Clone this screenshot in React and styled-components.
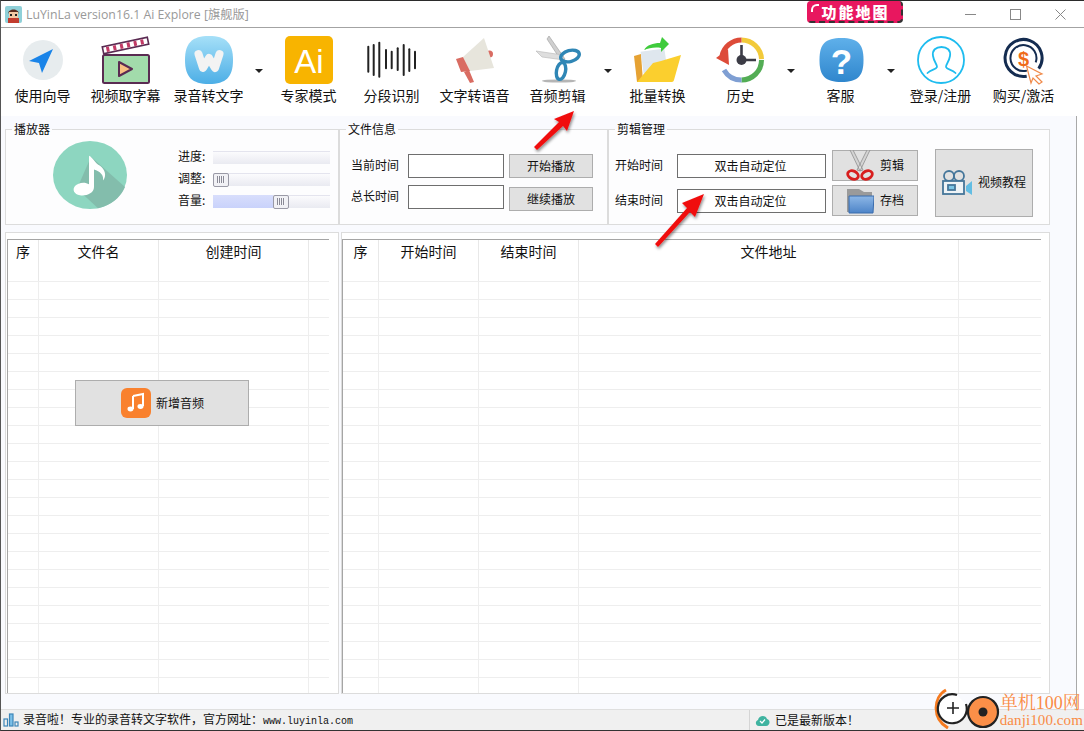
import React from "react";
import styled, { createGlobalStyle } from "styled-components";

const CJK = `"Noto Sans CJK SC", "Noto Sans", sans-serif`;

const Global = createGlobalStyle`
  html, body { margin: 0; padding: 0; background: #fff; }
  * { box-sizing: border-box; }
`;

const Win = styled.div`
  position: relative;
  width: 1084px;
  height: 731px;
  display: flex;
  flex-direction: column;
  overflow: hidden;
  border-top: 1px solid #2b2b2b;
  border-left: 1px solid #555;
  border-bottom: 1px solid #333;
  background: #fff;
  font-family: ${CJK};
  font-size: 13px;
  color: #111;
`;

const TitleBar = styled.div`
  height: 27px;
  flex: none;
  display: flex;
  align-items: center;
  padding-left: 4px;
  gap: 4px;
  border-bottom: 1px solid #a3a3a3;
`;
const TitleText = styled.span`
  font-family: "Open Sans", ${CJK};
  font-size: 12.3px;
  color: #999;
`;
const WinButtons = styled.div`
  margin-left: auto;
  display: flex;
  height: 100%;
  align-items: center;
`;
const WinBtn = styled.div`
  width: 45px;
  height: 100%;
  display: flex;
  align-items: center;
  justify-content: center;
  margin-right: ${(p) => p.$mr || 0}px;
`;

const Toolbar = styled.div`
  height: 88px;
  flex: none;
  display: flex;
  background: #fff;
`;
const Tool = styled.div`
  width: 83px;
  display: flex;
  flex-direction: column;
  align-items: center;
  padding-top: 8px;
`;
const ToolIcon = styled.svg`
  width: 50px;
  height: 50px;
  display: block;
`;
const ToolLabel = styled.span`
  margin-top: -1px;
  font-size: 14px;
  line-height: 20px;
  white-space: nowrap;
  color: #111;
`;
const Caret = styled.div`
  width: 17px;
  display: flex;
  justify-content: center;
  padding-top: 41px;
  &::after {
    content: "";
    width: 0;
    height: 0;
    border-left: 4px solid transparent;
    border-right: 4px solid transparent;
    border-top: 4px solid #222;
  }
`;

const Main = styled.div`
  flex: 1;
  min-height: 0;
  margin-right: 7px;
  padding: 13px 0 0 4px;
  background: #f9fafe;
  border-right: 1px solid #a9a9a9;
`;
const GroupRow = styled.div`
  display: flex;
  height: 96px;
`;
const Group = styled.div`
  position: relative;
  width: ${(p) => p.$w}px;
  height: 96px;
  display: flex;
  align-items: flex-start;
  padding-left: ${(p) => p.$pl}px;
  border: 1px solid #dcdcdc;
  background: #fdfdfe;
`;
const Legend = styled.span`
  position: absolute;
  top: -9px;
  left: 6px;
  padding: 0 2px;
  line-height: 16px;
  font-size: 12px;
  background: linear-gradient(#f9fafe 50%, #fdfdfe 50%);
`;

const Disc = styled.svg`
  width: 75px;
  height: 69px;
  margin-top: 11px;
  flex: none;
`;
const Sliders = styled.div`
  margin: 20px 0 0 50px;
  display: flex;
  flex-direction: column;
  gap: 8px;
`;
const SliderRow = styled.div`
  display: flex;
  align-items: center;
  height: 14px;
`;
const SliderLabel = styled.span`
  width: 35px;
  font-size: 12px;
  line-height: 12px;
  padding-bottom: 2px;
`;
const Track = styled.div`
  position: relative;
  width: 117px;
  height: 13px;
  border-top: 1px solid #e4e4ee;
  background: linear-gradient(#fbfbfd, #e9eaf1);
`;
const TrackFill = styled.div`
  position: absolute;
  left: 0;
  top: -1px;
  bottom: 0;
  background: linear-gradient(#d8defc, #c9d2fb);
`;
const Thumb = styled.div`
  position: absolute;
  top: -1px;
  left: ${(p) => p.$x}px;
  width: 16px;
  height: 14px;
  border: 1px solid #9a9aa6;
  border-radius: 2px;
  background: repeating-linear-gradient(90deg, #8a8a96 0 1px, #f5f5f8 1px 2px) center / 8px 7px no-repeat, #f1f1f5;
`;

const InfoBody = styled.div`
  margin-top: 24px;
  display: flex;
  flex-direction: column;
  gap: ${(p) => p.$gap}px;
`;
const InfoRow = styled.div`
  display: flex;
  align-items: flex-start;
  height: 24px;
`;
const FieldLabel = styled.span`
  width: ${(p) => p.$w}px;
  font-size: 12px;
  line-height: 22px;
  flex: none;
`;
const Field = styled.div`
  width: ${(p) => p.$w}px;
  height: 24px;
  flex: none;
  background: #fff;
  border: 1px solid #6e6e6e;
  display: flex;
  align-items: center;
  justify-content: center;
  padding: 0 2px 2px 0;
  font-size: 12px;
`;
const PlainBtn = styled.div`
  width: 84px;
  height: 24px;
  margin: ${(p) => p.$mt || 0}px 0 0 5px;
  display: flex;
  align-items: center;
  justify-content: center;
  padding-bottom: 2px;
  font-size: 12px;
  background: #e1e1e1;
  border: 1px solid #adadad;
`;
const Caption = styled.span`
  margin-bottom: ${(p) => p.$up}px;
`;
const CutButtons = styled.div`
  margin: 20px 0 0 6px;
  display: flex;
  flex-direction: column;
  gap: 4px;
`;
const IconBtn = styled.div`
  width: 86px;
  height: 31px;
  display: flex;
  align-items: center;
  padding-left: 13px;
  gap: 6px;
  font-size: 12px;
  background: #e1e1e1;
  border: 1px solid #adadad;
`;
const VideoBtn = styled.div`
  width: 98px;
  height: 68px;
  margin: 19px 0 0 17px;
  display: flex;
  align-items: center;
  padding-left: 6px;
  gap: 5px;
  font-size: 12px;
  background: #e1e1e1;
  border: 1px solid #adadad;
`;

const PanelRow = styled.div`
  display: flex;
  gap: 2px;
  margin-top: 7px;
  height: 462px;
`;
const Panel = styled.div`
  position: relative;
  width: ${(p) => p.$w}px;
  height: 462px;
  padding: 6px 0 0 ${(p) => p.$pl}px;
  border: 1px solid #dcdcdc;
  background: #fff;
  overflow: hidden;
`;
const Sheet = styled.div`
  width: ${(p) => p.$w}px;
  height: 454px;
  overflow: hidden;
  border-top: 1px solid #a5a5a5;
  border-left: 1px solid #a5a5a5;
`;
const HeadRow = styled.div`
  display: grid;
  grid-template-columns: ${(p) => p.$cols};
  height: 42px;
  border-bottom: 1px solid #eee;
`;
const HeadCell = styled.div`
  border-right: 1px solid #e8e8e8;
  text-align: center;
  font-size: 14px;
  line-height: 22px;
  color: #111;
  &:last-child {
    border-right: 0;
  }
`;
const BodyRow = styled.div`
  display: grid;
  grid-template-columns: ${(p) => p.$cols};
  height: 18px;
  border-bottom: 1px solid #eee;
`;
const BodyCell = styled.div`
  border-right: 1px solid #eee;
  &:last-child {
    border-right: 0;
  }
`;
const AddBtn = styled.div`
  position: absolute;
  left: 69px;
  top: 147px;
  width: 174px;
  height: 46px;
  display: flex;
  align-items: center;
  justify-content: center;
  gap: 5px;
  padding-left: 1px;
  font-size: 12px;
  background: #e1e1e1;
  border: 1px solid #adadad;
`;

const StatusBar = styled.div`
  height: 21px;
  flex: none;
  display: flex;
  align-items: center;
  background: #f0f0f0;
  border-top: 1px solid #dfdfdf;
  font-size: 12px;
  line-height: 18px;
`;
const StatusLeft = styled.div`
  width: 749px;
  height: 100%;
  display: flex;
  align-items: center;
  padding-left: 2px;
  gap: 4px;
  border-right: 1px solid #d5d5d5;
  white-space: nowrap;
`;
const StatusRight = styled.div`
  display: flex;
  align-items: center;
  padding-left: 5px;
  gap: 5px;
`;
const Mono = styled.span`
  font-family: "Liberation Mono", monospace;
  font-size: 10px;
`;

const Badge = styled.div`
  position: absolute;
  left: 806px;
  top: 0;
  width: 96px;
  height: 22px;
  display: flex;
  align-items: center;
  justify-content: center;
  padding-left: 3px;
  font-size: 15px;
  font-weight: 900;
  letter-spacing: 2px;
  color: #fff;
  background: #e8175f;
  border-radius: 4px;
  border-right: 2px dashed #333;
  border-bottom: 2px dashed #333;
  &::before {
    content: "";
    position: absolute;
    left: 4px;
    top: 3px;
    width: 6px;
    height: 6px;
    border-top: 2px solid #fff;
    border-left: 2px solid #fff;
    border-top-left-radius: 6px;
  }
`;
const Overlay = styled.svg`
  position: absolute;
  left: 0;
  top: 0;
  pointer-events: none;
`;
const Watermark = styled.div`
  position: absolute;
  right: 1px;
  bottom: 1px;
  display: flex;
  align-items: flex-end;
`;
const MarkText = styled.div`
  display: flex;
  flex-direction: column;
  color: #f98b45;
  font-family: "Liberation Serif", "Noto Serif CJK SC", ${CJK};
  white-space: nowrap;
`;
const MarkBig = styled.span`
  font-size: 18px;
  line-height: 18px;
`;
const MarkSmall = styled.span`
  font-size: 15px;
  line-height: 17px;
  letter-spacing: 0.1px;
`;

const tools = [
  { k: "nav", label: "使用向导" },
  { k: "clap", label: "视频取字幕" },
  { k: "w", label: "录音转文字", caret: true },
  { k: "ai", label: "专家模式" },
  { k: "wave", label: "分段识别" },
  { k: "horn", label: "文字转语音" },
  { k: "scissors", label: "音频剪辑", caret: true },
  { k: "folder", label: "批量转换" },
  { k: "clock", label: "历史", caret: true },
  { k: "help", label: "客服", caret: true },
  { k: "user", label: "登录/注册" },
  { k: "buy", label: "购买/激活" },
];

const waveBars = [
  [1.3, 10.7, 35.7], [6.7, 9, 39], [12.3, 6.7, 40.7], [19, 14, 32.3], [24.7, 15.7, 32.3],
  [30.7, 12.3, 34], [36.7, 9, 39], [42.3, 13.3, 35], [48, 15.7, 32.3],
];

const icons = {
  nav: (
    <>
      <circle cx="25" cy="24" r="20" fill="#e7ecee" />
      <path d="M35 13 L11 25 L21 27 L24 37 Z" fill="#1a84e8" />
    </>
  ),
  clap: (
    <>
      <rect x="2" y="19" width="46" height="28" rx="1.5" fill="#a2dbab" stroke="#5a2b52" strokeWidth="2" />
      <g transform="rotate(-12 24.5 9.5)">
        <rect x="1.5" y="6" width="46" height="7" fill="#fff" stroke="#5a2b52" strokeWidth="1.6" />
        {[5, 12, 19, 26, 33, 40].map((x) => (
          <rect key={x} x={x} y="7" width="3" height="5" fill="#c23a66" />
        ))}
      </g>
      <path d="M18 26 L31 33 L18 40 Z" fill="#f9c082" stroke="#5a2b52" strokeWidth="2" strokeLinejoin="round" />
    </>
  ),
  w: (
    <>
      <defs>
        <linearGradient id="gw" x1="0" y1="0" x2="0" y2="1">
          <stop offset="0" stopColor="#a6e0f8" />
          <stop offset="1" stopColor="#4caee6" />
        </linearGradient>
      </defs>
      <path d="M25 0 C42 0 49 7 49 24 C49 41 42 48 25 48 C8 48 1 41 1 24 C1 7 8 0 25 0 Z" fill="url(#gw)" />
      <path d="M14.5 18 L19 32 L25 22 L31 32 L35.5 18" fill="none" stroke="#f3f3f3" strokeWidth="8" strokeLinecap="round" strokeLinejoin="round" />
    </>
  ),
  ai: (
    <>
      <rect x="1" y="0" width="48" height="48" rx="5" fill="#f8b400" />
      <text x="25" y="37" textAnchor="middle" fontFamily="Liberation Sans, sans-serif" fontSize="33" fill="#fff">Ai</text>
    </>
  ),
  wave: (
    <g stroke="#222" strokeWidth="2" strokeLinecap="round">
      {waveBars.map(([x, a, b]) => (
        <line key={x} x1={x} y1={a} x2={x} y2={b} />
      ))}
    </g>
  ),
  horn: (
    <>
      <circle cx="39.5" cy="18" r="3.5" fill="#d96c62" />
      <path d="M34 2 L44 32 L20 35 L13 21 Z" fill="#e7e5dc" />
      <path d="M6 23 L13 21 L20 35 L11 36 Z" fill="#d96c62" />
      <path d="M14 36 L19 34 L24 46 L20 47 Z" fill="#d96c62" />
    </>
  ),
  scissors: (
    <>
      <ellipse cx="26" cy="45" rx="17" ry="1.6" fill="#b5b5b5" />
      <path d="M16 0 L32 23 L29 26 L14 3 Z" fill="#cfcfcf" stroke="#9c9c9c" strokeWidth=".6" />
      <path d="M3 15 L30 19 L31 24 L9 21 Z" fill="#dedede" stroke="#b5b5b5" strokeWidth=".6" />
      <ellipse cx="37" cy="20" rx="9.5" ry="5.5" transform="rotate(-15 37 20)" fill="none" stroke="#2f86b5" strokeWidth="3.4" />
      <ellipse cx="28" cy="35" rx="4.5" ry="8.5" transform="rotate(12 28 35)" fill="none" stroke="#2f86b5" strokeWidth="3.4" />
    </>
  ),
  folder: (
    <>
      <path d="M1 20 L8 18 L10 46 L4 46 Z" fill="#e6a233" />
      <rect x="9" y="14" width="24" height="22" fill="#dfe7ee" transform="rotate(-8 21 25)" />
      <path d="M4 46 L20 27 L28 25 L48 19 L41 44 C40.5 46 39 46 38 46 Z" fill="#fbcf2e" />
      <path d="M11 14 C14 9 20 7 27 7 L29 1 L36 8 L28 16 L28 12 C22 11 16 12 11 14 Z" fill="#3fcb3c" />
    </>
  ),
  clock: (
    <>
      <path d="M25.5 4 A20 20 0 0 1 45.5 23" fill="none" stroke="#f2ca3a" strokeWidth="5" />
      <path d="M45.5 24 A20 20 0 0 1 25.5 44" fill="none" stroke="#53ad55" strokeWidth="5" />
      <path d="M25.5 44 A20 20 0 0 1 8 34" fill="none" stroke="#7f9fd3" strokeWidth="5" />
      <path d="M6 20 A20 20 0 0 1 25.5 4" fill="none" stroke="#dd4b39" strokeWidth="5" />
      <path d="M0 22 L12 13 L13 29 Z" fill="#dd4b39" />
      <circle cx="25.5" cy="24" r="5" fill="#3c3c46" />
      <path d="M25.5 9 V24 H40" fill="none" stroke="#3c3c46" strokeWidth="2.6" />
    </>
  ),
  help: (
    <>
      <defs>
        <linearGradient id="gh" x1="0" y1="0" x2="0" y2="1">
          <stop offset="0" stopColor="#5fb0ea" />
          <stop offset="1" stopColor="#2f86cd" />
        </linearGradient>
      </defs>
      <path d="M25.5 2 C42 2 47.5 8 47.5 24 C47.5 40 42 46 25.5 46 C9 46 3.5 40 3.5 24 C3.5 8 9 2 25.5 2 Z" fill="url(#gh)" />
      <text x="25.5" y="38" textAnchor="middle" fontFamily="Liberation Sans, sans-serif" fontWeight="700" fontSize="35" fill="#fff">?</text>
    </>
  ),
  user: (
    <>
      <circle cx="25" cy="24" r="23" fill="none" stroke="#1ebcef" strokeWidth="1.8" />
      <path d="M11.5 37 C15 33 20 34 21 31 C21 28 18 26 17 20 C16 14 20 11 25.5 11 C31 11 35 14 34 20 C33 26 30 28 30 31 C31 34 36 33 39.5 37" fill="none" stroke="#1ebcef" strokeWidth="1.8" strokeLinecap="round" />
    </>
  ),
  buy: (
    <>
      <path d="M27.7 40.2 A18.5 18.5 0 1 1 39.7 32.6" fill="none" stroke="#142c50" strokeWidth="3" />
      <path d="M27.9 34.6 A13 13 0 1 1 36.7 26.4" fill="none" stroke="#142c50" strokeWidth="2" />
      <text x="24.5" y="30" textAnchor="middle" fontFamily="Liberation Sans, sans-serif" fontWeight="700" fontSize="20" fill="#ef6c1a">$</text>
      <path d="M27.5 30 L43 38 L37 40 L43 46 L40 48 L34 42 L32 47 Z" fill="#fff" stroke="#f08a4a" strokeWidth="1.2" />
    </>
  ),
};

const leftCols = "31px 120px 150px 20px";
const rightCols = "36px 100px 100px 380px 82px";
const rowCount = Array.from({ length: 23 }, (_, i) => i);

const DataSheet = ({ cols, heads, width }) => (
  <Sheet $w={width}>
    <HeadRow $cols={cols}>
      {heads.map((h, i) => (
        <HeadCell key={i}>{h}</HeadCell>
      ))}
    </HeadRow>
    {rowCount.map((r) => (
      <BodyRow key={r} $cols={cols}>
        {heads.map((_, i) => (
          <BodyCell key={i} />
        ))}
      </BodyRow>
    ))}
  </Sheet>
);

const Slider = ({ label, at, fill }) => (
  <SliderRow>
    <SliderLabel>{label}</SliderLabel>
    <Track>
      {fill ? <TrackFill style={{ width: at }} /> : null}
      {at !== undefined ? <Thumb $x={at} /> : null}
    </Track>
  </SliderRow>
);

export default function App() {
  return (
    <>
      <Global />
      <Win>
        <TitleBar>
          <svg width="17" height="17" viewBox="0 0 17 17">
            <rect width="17" height="17" rx="2" fill="#8fd0d8" />
            <path d="M3 8 C3 2 14 2 14 8 L13 6 L4 6 Z" fill="#5c2b1e" />
            <rect x="4" y="6" width="9" height="6" fill="#f3c7a3" />
            <rect x="5" y="8" width="2" height="2" fill="#222" />
            <rect x="10" y="8" width="2" height="2" fill="#222" />
            <rect x="3" y="12" width="11" height="5" fill="#c23c2e" />
          </svg>
          <TitleText>LuYinLa version16.1 Ai Explore [旗舰版]</TitleText>
          <WinButtons>
            <WinBtn>
              <svg width="11" height="11"><line x1="0" y1="5.5" x2="11" y2="5.5" stroke="#888" /></svg>
            </WinBtn>
            <WinBtn>
              <svg width="11" height="11"><rect x=".5" y=".5" width="10" height="10" fill="none" stroke="#888" /></svg>
            </WinBtn>
            <WinBtn $mr={1}>
              <svg width="11" height="11"><path d="M.5 .5 L10.5 10.5 M10.5 .5 L.5 10.5" stroke="#888" /></svg>
            </WinBtn>
          </WinButtons>
        </TitleBar>

        <Toolbar>
          {tools.map((t) => (
            <React.Fragment key={t.k}>
              <Tool>
                <ToolIcon viewBox="0 0 50 50">{icons[t.k]}</ToolIcon>
                <ToolLabel>{t.label}</ToolLabel>
              </Tool>
              {t.caret ? <Caret /> : null}
            </React.Fragment>
          ))}
        </Toolbar>

        <Main>
          <GroupRow>
            <Group $w={334} $pl={47}>
              <Legend>播放器</Legend>
              <Disc viewBox="0 0 75 75" preserveAspectRatio="none">
                <circle cx="37" cy="37" r="37" fill="#8dd6c0" />
                <path d="M38 17 L72 50 A37 37 0 0 1 45 73 L24 52 Z" fill="#83bdac" />
                <path d="M36 16 C40 18 42 24 47 27 C52 31 54 38 50 43 C51 37 47 33 41 31 L41 50 C41 57 33 60 27 59 C21 58 19 53 22 49 C25 45 32 44 36 47 Z" fill="#fff" />
              </Disc>
              <Sliders>
                <Slider label="进度:" />
                <Slider label="调整:" at={0} />
                <Slider label="音量:" at={60} fill />
              </Sliders>
            </Group>

            <Group $w={269} $pl={11}>
              <Legend>文件信息</Legend>
              <InfoBody $gap={7}>
                <InfoRow>
                  <FieldLabel $w={57}>当前时间</FieldLabel>
                  <Field $w={96} />
                  <PlainBtn>开始播放</PlainBtn>
                </InfoRow>
                <InfoRow>
                  <FieldLabel $w={57}>总长时间</FieldLabel>
                  <Field $w={96} />
                  <PlainBtn $mt={2}>继续播放</PlainBtn>
                </InfoRow>
              </InfoBody>
            </Group>

            <Group $w={442} $pl={6}>
              <Legend>剪辑管理</Legend>
              <InfoBody $gap={11}>
                <InfoRow>
                  <FieldLabel $w={62}>开始时间</FieldLabel>
                  <Field $w={149}>双击自动定位</Field>
                </InfoRow>
                <InfoRow>
                  <FieldLabel $w={62}>结束时间</FieldLabel>
                  <Field $w={149}>双击自动定位</Field>
                </InfoRow>
              </InfoBody>
              <CutButtons>
                <IconBtn>
                  <svg width="28" height="31" viewBox="0 0 28 31">
                    <path d="M4 0 L7 0 L17 20 L14 21 Z M24 0 L21 0 L11 20 L14 21 Z" fill="#d4d4d4" stroke="#8f8f8f" strokeWidth=".8" />
                    <ellipse cx="7" cy="25" rx="5.5" ry="4" transform="rotate(25 7 25)" fill="none" stroke="#d81e1e" strokeWidth="2.8" />
                    <ellipse cx="21" cy="25" rx="5.5" ry="4" transform="rotate(-25 21 25)" fill="none" stroke="#d81e1e" strokeWidth="2.8" />
                  </svg>
                  <Caption $up={2}>剪辑</Caption>
                </IconBtn>
                <IconBtn>
                  <svg width="28" height="27" viewBox="0 0 28 27">
                    <defs>
                      <linearGradient id="gf" x1="0" y1="0" x2="0" y2="1">
                        <stop offset="0" stopColor="#8db7e6" />
                        <stop offset="1" stopColor="#4d84c8" />
                      </linearGradient>
                    </defs>
                    <path d="M1 2 H13 L18 5 H26 V25 H1 Z" fill="#9a9a9a" />
                    <path d="M3 9 H28 L27 26 H3 Z" fill="url(#gf)" stroke="#3a6cad" />
                  </svg>
                  <Caption $up={2}>存档</Caption>
                </IconBtn>
              </CutButtons>
              <VideoBtn>
                <svg width="31" height="26" viewBox="0 0 31 26">
                  <g fill="none" stroke="#45769a" strokeWidth="1.8">
                    <circle cx="7" cy="6" r="5" />
                    <circle cx="17" cy="6" r="5" />
                    <rect x="1" y="11" width="21" height="13" fill="#eef3f6" />
                    <rect x="6" y="15" width="7" height="5" fill="#7cc6e6" />
                  </g>
                  <path d="M24 16 L30 11 V25 L24 21 Z" fill="#62bde3" />
                </svg>
                <Caption $up={4}>视频教程</Caption>
              </VideoBtn>
            </Group>
          </GroupRow>

          <PanelRow>
            <Panel $w={334} $pl={1}>
              <DataSheet width={322} cols={leftCols} heads={["序", "文件名", "创建时间", ""]} />
              <AddBtn>
                <svg width="30" height="30" viewBox="0 0 30 30">
                  <rect width="30" height="30" rx="6" fill="#f9812e" />
                  <path d="M12 8 L22 6 V18 M12 8 V21" fill="none" stroke="#fff" strokeWidth="2" />
                  <ellipse cx="9.5" cy="21" rx="3" ry="2.4" fill="#fff" />
                  <ellipse cx="19.5" cy="18.5" rx="3" ry="2.4" fill="#fff" />
                </svg>
                <Caption $up={2}>新增音频</Caption>
              </AddBtn>
            </Panel>
            <Panel $w={709} $pl={0}>
              <DataSheet width={699} cols={rightCols} heads={["序", "开始时间", "结束时间", "文件地址", ""]} />
            </Panel>
          </PanelRow>
        </Main>

        <StatusBar>
          <StatusLeft>
            <svg width="16" height="14" viewBox="0 0 16 14">
              <g fill="none" stroke="#3d86b8" strokeWidth="1.2">
                <rect x="1" y="6" width="3.5" height="7" />
                <rect x="6.5" y="1" width="3.5" height="12" fill="#7cc0e8" />
                <rect x="12" y="9" width="3" height="4" />
              </g>
            </svg>
            <span>{"录音啦\uFF01专业的录音转文字软件\uFF0C官方网址\uFF1A"}<Mono>www.luyinla.com</Mono></span>
          </StatusLeft>
          <StatusRight>
            <svg width="15" height="13" viewBox="0 0 15 13">
              <path d="M4 12 C0 12 0 7 3 6 C4 1 11 1 12 5 C16 6 15 12 11 12 Z" fill="#3fb3a0" />
              <path d="M5 7 L7 9 L10 5.5" fill="none" stroke="#fff" strokeWidth="1.2" />
            </svg>
            <span>{"已是最新版本\uFF01"}</span>
          </StatusRight>
        </StatusBar>

        <Badge>功能地图</Badge>

        <Overlay width="1084" height="731" viewBox="0 0 1084 731">
          <defs>
            <filter id="sh" x="-30%" y="-30%" width="160%" height="160%">
              <feDropShadow dx="1" dy="2" stdDeviation="1.5" floodColor="#000" floodOpacity=".45" />
            </filter>
          </defs>
          <path d="M533 146 L536 149 L562 125 L566 130 L573 110 L553 118 L558 121 Z" fill="#f01010" filter="url(#sh)" />
          <path d="M654 243 L657 246 L689 211 L694 216 L703 193 L681 202 L686 207 Z" fill="#f01010" filter="url(#sh)" />
        </Overlay>

        <Watermark>
          <svg width="66" height="42" viewBox="0 0 66 42">
            <path d="M12 3 C-1 10 -2 32 14 41" fill="none" stroke="#f57a1f" strokeWidth="3" />
            <path d="M23 8 A14.5 14.5 0 1 0 32 17" fill="#fff" stroke="#222" strokeWidth="2.2" />
            <path d="M13 21 H25 M19 15 V27" stroke="#222" strokeWidth="1.6" />
            <circle cx="49" cy="25" r="15" fill="#fb8f48" stroke="#222" strokeWidth="2.2" />
            <circle cx="49" cy="25" r="4.5" fill="#222" />
          </svg>
          <MarkText>
            <MarkBig>单机100网</MarkBig>
            <MarkSmall>danji100.com</MarkSmall>
          </MarkText>
        </Watermark>
      </Win>
    </>
  );
}
